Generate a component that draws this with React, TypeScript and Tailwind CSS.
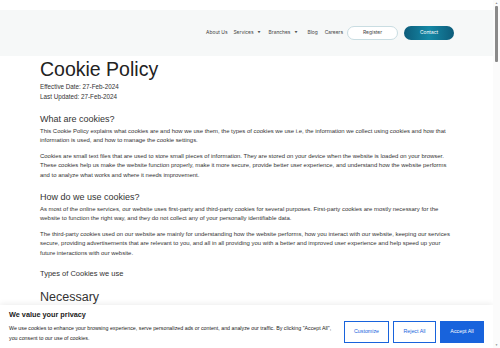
import React from "react";

const P = ({ children }: { children: React.ReactNode }) => (
  <p className="text-[5.95px] leading-[9.4px] text-[#333] mb-[6px]">{children}</p>
);

const Caret = () => (
  <span className="inline-block ml-[4px] text-[3px] align-middle text-[#555]">▼</span>
);

export default function App() {
  return (
    <div className="flex h-[348px] w-[500px] overflow-hidden bg-white" style={{ fontFamily: '"Liberation Sans", Arial, sans-serif' }}>
      <div className="relative flex-1 overflow-hidden">
        <div className="h-[10px] bg-white" />
        <header className="h-[46px] bg-[#f6f8f8] flex items-center justify-end pr-[39px]">
          <nav className="flex items-center text-[4.9px] text-[#444]" style={{ fontFamily: 'Inter, "Noto Sans", sans-serif' }}>
            <span className="mr-[6px]">About Us</span>
            <span className="mr-[8px] flex items-center">Services<Caret /></span>
            <span className="mr-[10px] flex items-center">Branches<Caret /></span>
            <span className="mr-[7px]">Blog</span>
            <span className="mr-[4px]">Careers</span>
            <span className="w-[51px] h-[14px] rounded-full border border-[#c9dde2] bg-white flex items-center justify-center mr-[6px]">Register</span>
            <span className="w-[50px] h-[14px] rounded-full bg-gradient-to-r from-[#0d5c7a] via-[#1589a6] to-[#0d5c7a] text-white flex items-center justify-center">Contact</span>
          </nav>
        </header>
        <main className="pl-[40px] pr-[43px] pt-[1px]">
          <h1 className="text-[19.5px] leading-[24px] text-[#222] mb-[1px]">Cookie Policy</h1>
          <div className="text-[6.3px] leading-[10px] text-[#333]">Effective Date: 27-Feb-2024</div>
          <div className="text-[6.3px] leading-[10px] text-[#333] mb-[11px]">Last Updated: 27-Feb-2024</div>

          <h2 className="text-[9px] leading-[12px] text-[#333] mb-[2px]">What are cookies?</h2>
          <P>
            This Cookie Policy explains what cookies are and how we use them, the types of cookies we use i.e, the information we collect using cookies and how that information is used, and how to manage the cookie settings.
          </P>
          <P>
            Cookies are small text files that are used to store small pieces of information. They are stored on your device when the website is loaded on your browser. These cookies help us make the website function properly, make it more secure, provide better user experience, and understand how the website performs and to analyze what works and where it needs improvement.
          </P>

          <h2 className="text-[9px] leading-[12px] text-[#333] mt-[11px] mb-[2px]">How do we use cookies?</h2>
          <P>
            As most of the online services, our website uses first-party and third-party cookies for several purposes. First-party cookies are mostly necessary for the website to function the right way, and they do not collect any of your personally identifiable data.
          </P>
          <P>
            The third-party cookies used on our website are mainly for understanding how the website performs, how you interact with our website, keeping our services secure, providing advertisements that are relevant to you, and all in all providing you with a better and improved user experience and help speed up your future interactions with our website.
          </P>

          <h3 className="text-[7.5px] leading-[11px] text-[#333] mt-[10px]">Types of Cookies we use</h3>
          <h2 className="text-[12.5px] leading-[16px] text-[#333] mt-[10px]">Necessary</h2>
          <P>
            Necessary cookies are required to enable the basic features of this site, such as providing secure log-in or adjusting your consent preferences.
          </P>
        </main>

        <div className="absolute left-0 right-0 bottom-0 h-[43px] bg-white shadow-[0_-1px_6px_rgba(0,0,0,0.08)] flex items-center pl-[9px] pr-[8px]">
          <div className="flex-1">
            <div className="text-[7.3px] font-bold text-[#212121] leading-[10px] mb-[4px]">We value your privacy</div>
            <div className="text-[5.3px] leading-[9.5px] text-[#212121] w-[330px]">
              We use cookies to enhance your browsing experience, serve personalized ads or content, and analyze our traffic. By clicking "Accept All", you consent to our use of cookies.
            </div>
          </div>
          <div className="flex items-center gap-[4px] mt-[11px] mr-[1px]">
            <button className="w-[45px] h-[22px] border-[1.5px] border-[#1863dc] text-[#1863dc] text-[5.3px] bg-white">Customize</button>
            <button className="w-[43px] h-[22px] border-[1.5px] border-[#1863dc] text-[#1863dc] text-[5.3px] bg-white">Reject All</button>
            <button className="w-[44px] h-[22px] border-[1.5px] border-[#1863dc] bg-[#1863dc] text-white text-[5.3px]">Accept All</button>
          </div>
        </div>
      </div>

      <div className="w-[7px] h-full bg-[#fbfbfb] flex flex-col items-center">
        <div className="h-[6px] flex items-center justify-center text-[3px] text-[#888]">▲</div>
        <div className="w-[3px] h-[56px] bg-[#8a8a8a] rounded-[1px]" />
        <div className="flex-1" />
        <div className="h-[6px] flex items-center justify-center text-[3px] text-[#888]">▼</div>
      </div>
    </div>
  );
}
